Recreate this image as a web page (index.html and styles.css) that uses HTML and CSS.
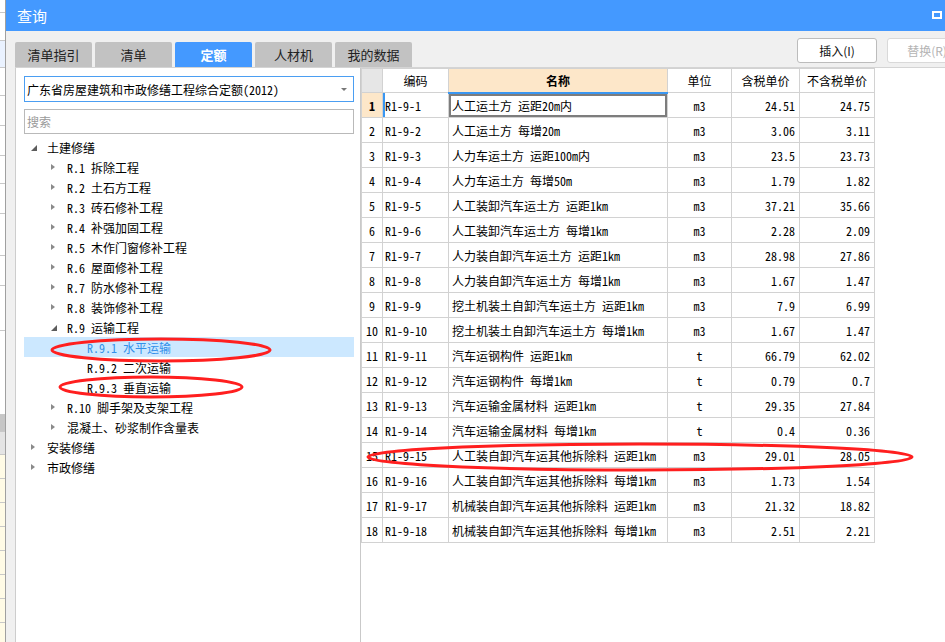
FILE: index.html
```html
<!DOCTYPE html>
<html lang="zh-CN">
<head>
<meta charset="utf-8">
<title>查询</title>
<link rel="stylesheet" href="styles.css">
</head>
<body>
<div class="screen">
  <div class="bg-app">
    <div class="bg-cell h13"></div>
    <div class="bg-cell h28"></div>
    <div class="bg-cell h27 blueish"></div>
    <div class="bg-cell h28"></div>
    <div class="bg-cell h30"></div>
    <div class="bg-cell h30"></div>
    <div class="bg-cell h28"></div>
    <div class="bg-cell h30"></div>
    <div class="bg-cell h42"></div>
    <div class="bg-cell h30"></div>
    <div class="bg-cell h45"></div>
    <div class="bg-cell h84"></div>
    <div class="bg-cell h17 grey"></div>
    <div class="bg-cell h23 lightgrey"></div>
    <div class="bg-cell h24 yellow"></div>
    <div class="bg-cell h24 yellow"></div>
    <div class="bg-cell h24 yellow"></div>
    <div class="bg-cell h24 yellow"></div>
    <div class="bg-cell h24 yellow"></div>
    <div class="bg-cell h24 yellow"></div>
    <div class="bg-cell h24 yellow"></div>
    <div class="bg-cell h24 yellow"></div>
  </div>

  <div class="dialog">
    <div class="titlebar">
      <span class="title">查询</span>
      <span class="close"></span>
    </div>
    <div class="dlg-body">
      <div class="toolbar">
        <div class="tabs">
          <div class="tab">清单指引</div>
          <div class="tab">清单</div>
          <div class="tab active">定额</div>
          <div class="tab">人材机</div>
          <div class="tab">我的数据</div>
        </div>
        <div class="actions">
          <button class="btn">插入(I)</button>
          <button class="btn disabled">替换(R)</button>
        </div>
      </div>

      <div class="panes">
        <div class="left-pane">
          <div class="select">
            <span class="select-text">广东省房屋建筑和市政修缮工程综合定额(2012)</span>
            <i class="caret"></i>
          </div>
          <div class="search">搜索</div>
          <ul class="tree">
            <li class="node l0"><span class="tog open"></span>土建修缮</li>
            <li class="node l1"><span class="tog closed"></span>R.1 拆除工程</li>
            <li class="node l1"><span class="tog closed"></span>R.2 土石方工程</li>
            <li class="node l1"><span class="tog closed"></span>R.3 砖石修补工程</li>
            <li class="node l1"><span class="tog closed"></span>R.4 补强加固工程</li>
            <li class="node l1"><span class="tog closed"></span>R.5 木作门窗修补工程</li>
            <li class="node l1"><span class="tog closed"></span>R.6 屋面修补工程</li>
            <li class="node l1"><span class="tog closed"></span>R.7 防水修补工程</li>
            <li class="node l1"><span class="tog closed"></span>R.8 装饰修补工程</li>
            <li class="node l1"><span class="tog open"></span>R.9 运输工程</li>
            <li class="node l2 sel"><span class="tog"></span>R.9.1 水平运输</li>
            <li class="node l2"><span class="tog"></span>R.9.2 二次运输</li>
            <li class="node l2"><span class="tog"></span>R.9.3 垂直运输</li>
            <li class="node l1"><span class="tog closed"></span>R.10 脚手架及支架工程</li>
            <li class="node l1"><span class="tog closed"></span>混凝土、砂浆制作含量表</li>
            <li class="node l0"><span class="tog closed"></span>安装修缮</li>
            <li class="node l0"><span class="tog closed"></span>市政修缮</li>
          </ul>
        </div>

        <div class="right-pane">
          <table class="grid">
            <colgroup>
              <col class="c-no"><col class="c-code"><col class="c-name"><col class="c-unit"><col class="c-p1"><col class="c-p2">
            </colgroup>
            <thead>
              <tr class="head">
                <th class="corner"></th>
                <th>编码</th>
                <th class="name-h">名称</th>
                <th>单位</th>
                <th>含税单价</th>
                <th>不含税单价</th>
              </tr>
            </thead>
            <tbody>
              <tr class="cur"><td class="no">1</td><td class="code">R1-9-1</td><td class="name">人工运土方 运距20m内</td><td class="unit">m3</td><td class="num">24.51</td><td class="num">24.75</td></tr>
              <tr><td class="no">2</td><td class="code">R1-9-2</td><td class="name">人工运土方 每增20m</td><td class="unit">m3</td><td class="num">3.06</td><td class="num">3.11</td></tr>
              <tr><td class="no">3</td><td class="code">R1-9-3</td><td class="name">人力车运土方 运距100m内</td><td class="unit">m3</td><td class="num">23.5</td><td class="num">23.73</td></tr>
              <tr><td class="no">4</td><td class="code">R1-9-4</td><td class="name">人力车运土方 每增50m</td><td class="unit">m3</td><td class="num">1.79</td><td class="num">1.82</td></tr>
              <tr><td class="no">5</td><td class="code">R1-9-5</td><td class="name">人工装卸汽车运土方 运距1km</td><td class="unit">m3</td><td class="num">37.21</td><td class="num">35.66</td></tr>
              <tr><td class="no">6</td><td class="code">R1-9-6</td><td class="name">人工装卸汽车运土方 每增1km</td><td class="unit">m3</td><td class="num">2.28</td><td class="num">2.09</td></tr>
              <tr><td class="no">7</td><td class="code">R1-9-7</td><td class="name">人力装自卸汽车运土方 运距1km</td><td class="unit">m3</td><td class="num">28.98</td><td class="num">27.86</td></tr>
              <tr><td class="no">8</td><td class="code">R1-9-8</td><td class="name">人力装自卸汽车运土方 每增1km</td><td class="unit">m3</td><td class="num">1.67</td><td class="num">1.47</td></tr>
              <tr><td class="no">9</td><td class="code">R1-9-9</td><td class="name">挖土机装土自卸汽车运土方 运距1km</td><td class="unit">m3</td><td class="num">7.9</td><td class="num">6.99</td></tr>
              <tr><td class="no">10</td><td class="code">R1-9-10</td><td class="name">挖土机装土自卸汽车运土方 每增1km</td><td class="unit">m3</td><td class="num">1.67</td><td class="num">1.47</td></tr>
              <tr><td class="no">11</td><td class="code">R1-9-11</td><td class="name">汽车运钢构件 运距1km</td><td class="unit">t</td><td class="num">66.79</td><td class="num">62.02</td></tr>
              <tr><td class="no">12</td><td class="code">R1-9-12</td><td class="name">汽车运钢构件 每增1km</td><td class="unit">t</td><td class="num">0.79</td><td class="num">0.7</td></tr>
              <tr><td class="no">13</td><td class="code">R1-9-13</td><td class="name">汽车运输金属材料 运距1km</td><td class="unit">t</td><td class="num">29.35</td><td class="num">27.84</td></tr>
              <tr><td class="no">14</td><td class="code">R1-9-14</td><td class="name">汽车运输金属材料 每增1km</td><td class="unit">t</td><td class="num">0.4</td><td class="num">0.36</td></tr>
              <tr><td class="no">15</td><td class="code">R1-9-15</td><td class="name">人工装自卸汽车运其他拆除料 运距1km</td><td class="unit">m3</td><td class="num">29.01</td><td class="num">28.05</td></tr>
              <tr><td class="no">16</td><td class="code">R1-9-16</td><td class="name">人工装自卸汽车运其他拆除料 每增1km</td><td class="unit">m3</td><td class="num">1.73</td><td class="num">1.54</td></tr>
              <tr><td class="no">17</td><td class="code">R1-9-17</td><td class="name">机械装自卸汽车运其他拆除料 运距1km</td><td class="unit">m3</td><td class="num">21.32</td><td class="num">18.82</td></tr>
              <tr><td class="no">18</td><td class="code">R1-9-18</td><td class="name">机械装自卸汽车运其他拆除料 每增1km</td><td class="unit">m3</td><td class="num">2.51</td><td class="num">2.21</td></tr>
            </tbody>
          </table>
        </div>
      </div>
    </div>
  </div>

  <svg class="annot" width="945" height="642" viewBox="0 0 945 642" aria-hidden="true">
    <ellipse cx="161" cy="350" rx="109" ry="11" />
    <ellipse cx="151" cy="387" rx="91" ry="10" />
    <ellipse cx="640" cy="457" rx="272" ry="13" />
  </svg>
</div>
</body>
</html>
```

FILE: styles.css
```css
html, body {
  margin: 0;
  padding: 0;
}

body {
  width: 945px;
  height: 642px;
  overflow: hidden;
  background: #ffffff;
  font-family: "Noto Sans CJK SC", "Liberation Sans", sans-serif;
  color: #000;
}

.screen {
  position: relative;
  display: flex;
  width: 945px;
  height: 642px;
}

/* background application strip on the far left */
.bg-app {
  width: 6px;
  flex: none;
  display: flex;
  flex-direction: column;
  background: #ffffff;
  border-right: 1px solid #a0a0a0;
  box-sizing: border-box;
  overflow: hidden;
}
.bg-cell { flex: none; border-bottom: 1px solid #c8c8c8; box-sizing: border-box; }
.h13 { height: 13px; }
.h17 { height: 17px; }
.h23 { height: 23px; }
.h24 { height: 24px; }
.h27 { height: 27px; }
.h28 { height: 28px; }
.h30 { height: 30px; }
.h42 { height: 42px; }
.h45 { height: 45px; }
.h84 { height: 84px; }
.blueish { background: #eaf2ff; }
.grey { background: #c6c6c6; }
.lightgrey { background: #e4e4e4; }
.yellow { background: #fffbe6; }

/* dialog */
.dialog {
  flex: 1;
  min-width: 0;
  display: flex;
  flex-direction: column;
}

.titlebar {
  height: 31px;
  flex: none;
  background: #4499ff;
  display: flex;
  align-items: center;
  padding-left: 11px;
  color: #ffffff;
}
.title {
  font-size: 15px;
}
.close {
  margin-left: auto;
  margin-right: 3px;
  width: 10px;
  height: 8px;
  border: 2px solid #ffffff;
  box-sizing: border-box;
  margin-top: -2px;
}

.dlg-body {
  flex: 1;
  min-height: 0;
  background: #f0f0f0;
  padding-left: 9px;
  display: flex;
  flex-direction: column;
  overflow: hidden;
}

.toolbar {
  height: 36px;
  flex: none;
  display: flex;
  align-items: flex-end;
}

.tabs {
  display: flex;
  gap: 3px;
}
.tab {
  width: 77px;
  height: 25px;
  background: #c2c2c2;
  border-radius: 2px 2px 0 0;
  display: flex;
  align-items: center;
  justify-content: center;
  font-size: 13px;
  color: #222222;
}
.tab.active {
  background: #4499ff;
  color: #ffffff;
  font-weight: bold;
}

.actions {
  margin-left: auto;
  margin-right: -22px;
  align-self: flex-start;
  margin-top: 7px;
  display: flex;
  gap: 10px;
}
.btn {
  width: 80px;
  height: 25px;
  border: 1px solid #bcbcbc;
  border-radius: 3px;
  background: #ffffff;
  font-family: "Noto Sans CJK SC", "Liberation Sans", sans-serif;
  font-size: 12px;
  color: #111111;
  padding: 0;
}
.btn.disabled {
  color: #b4b4b4;
  border-color: #d9d9d9;
}

.panes {
  flex: 1;
  min-height: 0;
  display: flex;
  border-top: 1px solid #d4d4d4;
}

/* left tree pane */
.left-pane {
  width: 336px;
  flex: none;
  background: #ffffff;
  border-left: 1px solid #cdcdcd;
  padding: 8px 0 0 8px;
  box-sizing: content-box;
  font-family: "Noto Sans Mono CJK SC", "Noto Sans CJK SC", monospace;
  font-size: 12px;
}

.select {
  width: 330px;
  height: 26px;
  box-sizing: border-box;
  border: 1px solid #4b9ef2;
  display: flex;
  align-items: center;
  padding-left: 2px;
}
.select-text { white-space: nowrap; }
.caret {
  margin-left: auto;
  margin-right: 6px;
  width: 0;
  height: 0;
  border-left: 3px solid transparent;
  border-right: 3px solid transparent;
  border-top: 3px solid #777777;
}

.search {
  margin-top: 7px;
  width: 330px;
  height: 25px;
  box-sizing: border-box;
  border: 1px solid #b9b9b9;
  display: flex;
  align-items: center;
  padding-left: 2px;
  color: #9a9a9a;
}

.tree {
  list-style: none;
  margin: 3px 0 0;
  padding: 0;
  width: 330px;
}
.node {
  height: 20px;
  display: flex;
  align-items: center;
  white-space: nowrap;
  color: #000000;
}
.node.l0 { padding-left: 7px; }
.node.l1 { padding-left: 27px; }
.node.l2 { padding-left: 47px; }
.node.sel {
  background: #cce8ff;
  color: #3390ea;
}

.tog {
  width: 16px;
  height: 20px;
  flex: none;
  position: relative;
}
.tog.closed::before {
  content: "";
  position: absolute;
  left: 0;
  top: 7px;
  width: 0;
  height: 0;
  border-top: 3.5px solid transparent;
  border-bottom: 3.5px solid transparent;
  border-left: 4px solid #8a8a8a;
}
.tog.open::before {
  content: "";
  position: absolute;
  left: 0;
  top: 8px;
  width: 0;
  height: 0;
  border-left: 6px solid transparent;
  border-bottom: 6px solid #5c5c5c;
}

/* right grid pane */
.right-pane {
  flex: 1;
  min-width: 0;
  background: #ffffff;
  border-left: 1px solid #c9c9c9;
}

.grid {
  border-collapse: collapse;
  table-layout: fixed;
  width: 514px;
  font-family: "Noto Sans Mono CJK SC", "Noto Sans CJK SC", monospace;
  font-size: 12px;
}
.c-no { width: 21px; }
.c-code { width: 66px; }
.c-name { width: 219px; }
.c-unit { width: 64px; }
.c-p1 { width: 68px; }
.c-p2 { width: 75px; }

.grid th,
.grid td {
  border: 1px solid #d2d2d2;
  padding: 0 3px;
  white-space: nowrap;
  overflow: hidden;
}
.grid tr.head { height: 24px; }
.grid tbody tr { height: 25px; }

.grid th {
  font-weight: normal;
  text-align: center;
  font-family: "Noto Sans CJK SC", sans-serif;
  font-size: 12px;
}
.grid th.corner { background: #e6e6e6; }
.grid th.name-h {
  background: #fde7c9;
  font-weight: bold;
  border-bottom: 2px solid #3a97f2;
}

.grid td.no {
  text-align: center;
  padding: 0;
}
.grid td.code { padding-left: 2px; }
.grid td.name { padding-left: 3px; }
.grid td.unit { text-align: center; }
.grid td.num { text-align: right; padding-right: 4px; }

.grid tr.cur td.no {
  background: #fde7c9;
  font-weight: bold;
}
.grid tr.cur td.code {
  box-shadow: inset 2px 0 0 #3a97f2;
}
.grid tr.cur td.name {
  box-shadow: inset 0 0 0 2px #7d7d7d;
}

/* red hand-drawn annotations */
.annot {
  position: absolute;
  left: 0;
  top: 0;
  pointer-events: none;
}
.annot ellipse {
  fill: none;
  stroke: #ff1f1f;
  stroke-width: 3;
}
```
